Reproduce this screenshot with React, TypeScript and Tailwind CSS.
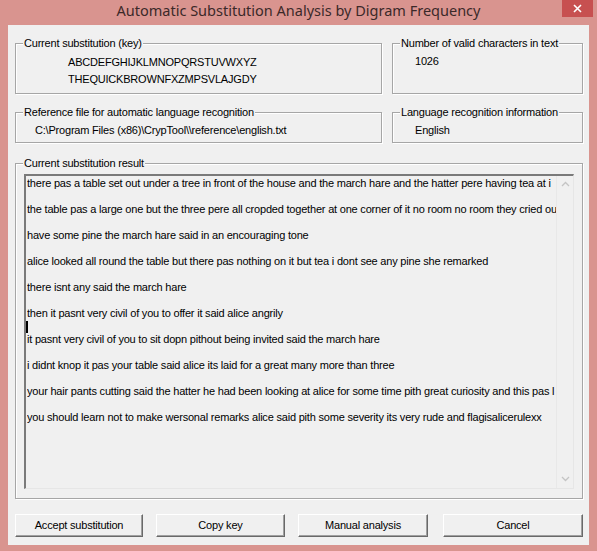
import type { ReactNode } from "react";

// lines as far as they are visible in the read-only edit box
const resultLines = [
  "there pas a table set out under a tree in front of the house and the march hare and the hatter pere having tea at i",
  "the table pas a large one but the three pere all cropded together at one corner of it no room no room they cried ou",
  "have some pine the march hare said in an encouraging tone",
  "alice looked all round the table but there pas nothing on it but tea i dont see any pine she remarked",
  "there isnt any said the march hare",
  "then it pasnt very civil of you to offer it said alice angrily",
  "it pasnt very civil of you to sit dopn pithout being invited said the march hare",
  "i didnt knop it pas your table said alice its laid for a great many more than three",
  "your hair pants cutting said the hatter he had been looking at alice for some time pith great curiosity and this pas l",
  "you should learn not to make wersonal remarks alice said pith some severity its very rude and flagisalicerulexx",
];

function Group({ label, className, children }: { label: string; className: string; children?: ReactNode }) {
  return (
    <div className={`relative border border-[#a6a6a6] shadow-[inset_1px_1px_0_#ffffff,1px_1px_0_#ffffff] ${className}`}>
      <span className="absolute -top-[7px] left-[7px] bg-[#f0f0f0] px-[1px] leading-[13px] whitespace-nowrap">
        {label}
      </span>
      {children}
    </div>
  );
}

function Button({ label, className }: { label: string; className: string }) {
  return (
    <button
      className={`h-[23px] bg-[#f0f0f0] border border-t-white border-l-white border-r-[#696969] border-b-[#696969] shadow-[inset_-1px_-1px_0_#a0a0a0] leading-[13px] text-black ${className}`}
    >
      {label}
    </button>
  );
}

export default function App() {
  return (
    <div className="w-[597px] h-[551px] bg-[#d9948f] flex flex-col font-['Liberation_Sans',Arial,sans-serif] text-[11px] tracking-[-0.2px] text-black select-none overflow-hidden">
      {/* Title bar */}
      <div className="relative h-[25px] flex items-center justify-center shrink-0">
        <span className="font-['Noto_Sans',sans-serif] text-[14.5px] tracking-normal text-[#3b2929] mt-[-3px]">
          Automatic Substitution Analysis by Digram Frequency
        </span>
        <div className="absolute top-0 right-[4px] w-[31px] h-[17px] bg-[#c75050] flex items-center justify-center">
          <svg width="9" height="9" viewBox="0 0 9 9">
            <path d="M1 1 L8 8 M8 1 L1 8" stroke="#ffffff" strokeWidth="1.6" />
          </svg>
        </div>
      </div>

      {/* Client area */}
      <div className="flex-1 flex pl-[8px] pr-[8px] pb-[6px] min-w-0">
        <div className="w-[581px] min-w-0 bg-[#f0f0f0] flex flex-col pt-[18px] pl-[7px] pr-[6px]">
          {/* Row 1 */}
          <div className="flex gap-[10px] h-[51px] shrink-0">
            <Group label="Current substitution (key)" className="w-[367px]">
              <div className="pt-[10px] pl-[52px] leading-[17px]">
                <div>ABCDEFGHIJKLMNOPQRSTUVWXYZ</div>
                <div>THEQUICKBROWNFXZMPSVLAJGDY</div>
              </div>
            </Group>
            <Group label="Number of valid characters in text" className="w-[191px]">
              <div className="pt-[11px] pl-[22px] leading-[13px]">1026</div>
            </Group>
          </div>

          {/* Row 2 */}
          <div className="flex gap-[10px] h-[31px] mt-[18px] shrink-0">
            <Group label="Reference file for automatic language recognition" className="w-[367px]">
              <div className="pt-[11px] pl-[19px] leading-[13px]">
                C:\Program Files (x86)\CrypTool\\reference\english.txt
              </div>
            </Group>
            <Group label="Language recognition information" className="w-[191px]">
              <div className="pt-[11px] pl-[22px] leading-[13px]">English</div>
            </Group>
          </div>

          {/* Result */}
          <Group label="Current substitution result" className="w-[568px] h-[336px] mt-[20px] flex flex-col shrink-0">
            <div className="flex-1 min-w-0 flex mt-[10px] mb-[9px] ml-[8px] mr-[8px] border-t-2 border-l-2 border-t-[#7a7a7a] border-l-[#7a7a7a] border-r border-b border-r-[#e6e6e6] border-b-[#e6e6e6] bg-[#f0f0f0] overflow-hidden">
              <div className="flex-1 min-w-0 overflow-hidden pt-[1px] pl-[1px] leading-[13px] whitespace-nowrap">
                {resultLines.map((line, i) => (
                  <div key={i}>
                    <div className="overflow-hidden">{line}</div>
                    <div className="h-[13px] flex items-center">
                      {i === 5 && <span className="w-[2px] h-[12px] bg-black -ml-[1px]" />}
                    </div>
                  </div>
                ))}
              </div>
              {/* Vertical scrollbar (disabled) */}
              <div className="w-[17px] shrink-0 border-l border-[#e8e8e8] flex flex-col items-center justify-between pt-[5px] pb-[6px]">
                <svg width="9" height="6" viewBox="0 0 9 6">
                  <path d="M1 5 L4.5 1.5 L8 5" stroke="#c4c4c4" strokeWidth="1.3" fill="none" />
                </svg>
                <svg width="9" height="6" viewBox="0 0 9 6">
                  <path d="M1 1 L4.5 4.5 L8 1" stroke="#c4c4c4" strokeWidth="1.3" fill="none" />
                </svg>
              </div>
            </div>
          </Group>

          {/* Buttons */}
          <div className="flex mt-[15px] shrink-0">
            <Button label="Accept substitution" className="w-[128px]" />
            <Button label="Copy key" className="w-[129px] ml-[13px]" />
            <Button label="Manual analysis" className="w-[130px] ml-[13px]" />
            <Button label="Cancel" className="w-[140px] ml-[15px]" />
          </div>
        </div>
      </div>
    </div>
  );
}
